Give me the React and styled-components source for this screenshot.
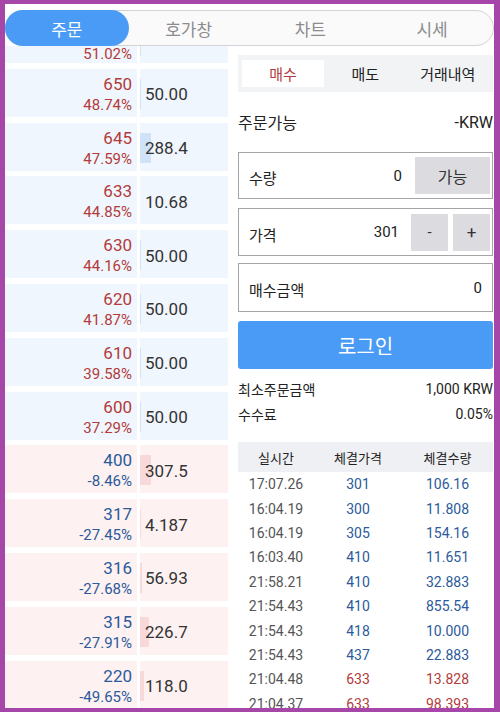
import React from 'react';
import styled, { createGlobalStyle } from 'styled-components';

const GlobalStyle = createGlobalStyle`
  html, body {
    margin: 0;
    padding: 0;
    background: #a646a8;
  }
  * {
    box-sizing: border-box;
  }
`;

const FONT = `Roboto, "Noto Sans CJK KR", "Noto Sans", sans-serif`;
const RED = '#b23b3b';
const BLUE = '#2c5a9a';

const Frame = styled.div`
  width: 500px;
  height: 712px;
  border-style: solid;
  border-color: #a646a8;
  border-width: 4px 6px 4px 5px;
  background: #ffffff;
  display: flex;
  flex-direction: column;
  overflow: hidden;
  font-family: ${FONT};
`;

const TabBar = styled.div`
  margin: 6px 0 0 0;
  height: 36px;
  flex: none;
  display: grid;
  grid-template-columns: repeat(4, 1fr);
  border: 1px solid #d3d3d7;
  border-radius: 18px;
  background: #fafafb;
`;

const Tab = styled.div`
  margin: -1px;
  display: flex;
  align-items: center;
  justify-content: center;
  border-radius: 18px;
  font-size: 17px;
  color: ${p => (p.active ? '#ffffff' : '#8c8c8e')};
  background: ${p => (p.active ? '#4a9bf5' : 'transparent')};
`;

const Body = styled.div`
  flex: 1;
  display: flex;
  overflow: hidden;
`;

const OrderBook = styled.div`
  width: 223px;
  flex: none;
  display: flex;
  flex-direction: column;
  gap: 5.8px;
`;

const BookRow = styled.div`
  height: ${p => (p.partial ? 17 : 48)}px;
  flex: none;
  display: flex;
  gap: 3px;
`;

const PriceCell = styled.div`
  width: 132px;
  flex: none;
  padding: ${p => (p.partial ? '0 5px 0 0' : '5px 5px 1px 0')};
  background: ${p => (p.side === 'sell' ? '#f0f6fd' : '#fdf1f1')};
  color: ${p => (p.side === 'sell' ? RED : BLUE)};
  display: flex;
  flex-direction: column;
  justify-content: flex-end;
  align-items: flex-end;
  overflow: hidden;
`;

const Price = styled.div`
  font-size: 17px;
  line-height: 21px;
`;

const Change = styled.div`
  font-size: 15px;
  line-height: ${p => (p.partial ? 18 : 21)}px;
  flex: none;
`;

const QtyCell = styled.div`
  flex: 1;
  position: relative;
  padding: 3px 0 0 5px;
  background: ${p => (p.side === 'sell' ? '#f0f6fd' : '#fdf1f1')};
  display: flex;
  align-items: center;
  font-size: 17px;
  color: #333333;
  overflow: hidden;
`;

const VolumeBar = styled.div`
  position: absolute;
  left: 0;
  top: ${p => (p.partial ? -20 : 10)}px;
  height: 30px;
  background: ${p => (p.side === 'sell' ? '#cfe2f8' : '#f8d8d8')};
`;

const QtyText = styled.span`
  position: relative;
`;

const Panel = styled.div`
  margin-left: 10px;
  width: 255px;
  flex: none;
  padding-top: 9px;
`;

const SubTabs = styled.div`
  height: 37px;
  padding: 5px 4px;
  background: #f2f3f5;
  display: grid;
  grid-template-columns: 82px 1fr 1fr;
`;

const SubTab = styled.div`
  display: flex;
  align-items: center;
  justify-content: center;
  font-size: 15px;
  color: ${p => (p.active ? RED : '#222222')};
  background: ${p => (p.active ? '#ffffff' : 'transparent')};
`;

const InfoLine = styled.div`
  height: ${p => p.h || 25}px;
  display: flex;
  align-items: center;
  justify-content: space-between;
  font-size: ${p => p.size || 14}px;
  color: #222222;
`;

const Field = styled.div`
  height: ${p => p.h}px;
  margin-bottom: ${p => p.mb || 0}px;
  border: 1px solid #a5a5a8;
  display: flex;
  align-items: center;
  padding: 4px 2px 4px 10px;
  gap: 5px;
`;

const FieldLabel = styled.div`
  flex: 1;
  font-size: 15px;
  color: #222222;
  padding-top: 4px;
`;

const FieldValue = styled.div`
  font-size: 15px;
  color: #222222;
  margin-right: ${p => p.mr || 0}px;
`;

const GreyButton = styled.div`
  width: ${p => p.w}px;
  height: 37px;
  background: #dcdce0;
  display: flex;
  align-items: center;
  justify-content: center;
  font-size: ${p => p.size || 16}px;
  color: #333333;
`;

const LoginButton = styled.div`
  margin: 9px 0 7px;
  height: 48px;
  border-radius: 3px;
  background: #4a9bf5;
  color: #ffffff;
  font-size: 20px;
  display: flex;
  align-items: center;
  justify-content: center;
`;

const TradeHead = styled.div`
  margin-top: 16px;
  height: 30px;
  background: #eff0f3;
  display: grid;
  grid-template-columns: 76px 88px 1fr;
  align-items: center;
  font-size: 13px;
  color: #222222;
  text-align: center;
`;

const TradeRow = styled.div`
  height: 24.4px;
  display: grid;
  grid-template-columns: 76px 88px 1fr;
  align-items: center;
  text-align: center;
  font-size: 14px;
  color: ${p => (p.up ? RED : BLUE)};
`;

const TimeCell = styled.div`
  color: #555555;
`;

const sells = [
  ['650', '48.74%', '50.00', 1],
  ['645', '47.59%', '288.4', 11],
  ['633', '44.85%', '10.68', 0],
  ['630', '44.16%', '50.00', 1],
  ['620', '41.87%', '50.00', 1],
  ['610', '39.58%', '50.00', 1],
  ['600', '37.29%', '50.00', 1],
];

const buys = [
  ['400', '-8.46%', '307.5', 11],
  ['317', '-27.45%', '4.187', 1],
  ['316', '-27.68%', '56.93', 2],
  ['315', '-27.91%', '226.7', 9],
  ['220', '-49.65%', '118.0', 4],
];

const trades = [
  ['17:07.26', '301', '106.16', false],
  ['16:04.19', '300', '11.808', false],
  ['16:04.19', '305', '154.16', false],
  ['16:03.40', '410', '11.651', false],
  ['21:58.21', '410', '32.883', false],
  ['21:54.43', '410', '855.54', false],
  ['21:54.43', '418', '10.000', false],
  ['21:54.43', '437', '22.883', false],
  ['21:04.48', '633', '13.828', true],
  ['21:04.37', '633', '98.393', true],
];

const Row = ({ side, price, change, qty, bar, partial }) => (
  <BookRow partial={partial}>
    <PriceCell side={side} partial={partial}>
      {!partial && <Price>{price}</Price>}
      <Change partial={partial}>{change}</Change>
    </PriceCell>
    <QtyCell side={side}>
      {bar > 0 && <VolumeBar side={side} partial={partial} style={{ width: bar }} />}
      {!partial && <QtyText>{qty}</QtyText>}
    </QtyCell>
  </BookRow>
);

export default function App() {
  return (
    <Frame>
      <GlobalStyle />
      <TabBar>
        <Tab active>주문</Tab>
        <Tab>호가창</Tab>
        <Tab>차트</Tab>
        <Tab>시세</Tab>
      </TabBar>
      <Body>
        <OrderBook>
          <Row partial side="sell" change="51.02%" bar={1} />
          {sells.map(([p, c, q, b], i) => (
            <Row key={'s' + i} side="sell" price={p} change={c} qty={q} bar={b} />
          ))}
          {buys.map(([p, c, q, b], i) => (
            <Row key={'b' + i} side="buy" price={p} change={c} qty={q} bar={b} />
          ))}
        </OrderBook>
        <Panel>
          <SubTabs>
            <SubTab active>매수</SubTab>
            <SubTab>매도</SubTab>
            <SubTab>거래내역</SubTab>
          </SubTabs>
          <InfoLine h={60} size={16}>
            <span>주문가능</span>
            <span>-KRW</span>
          </InfoLine>
          <Field h={47} mb={9}>
            <FieldLabel>수량</FieldLabel>
            <FieldValue mr={8}>0</FieldValue>
            <GreyButton w={75}>가능</GreyButton>
          </Field>
          <Field h={48} mb={7}>
            <FieldLabel>가격</FieldLabel>
            <FieldValue mr={7}>301</FieldValue>
            <GreyButton w={37} size={15}>-</GreyButton>
            <GreyButton w={37} size={17}>+</GreyButton>
          </Field>
          <Field h={49}>
            <FieldLabel>매수금액</FieldLabel>
            <FieldValue mr={8}>0</FieldValue>
          </Field>
          <LoginButton>로그인</LoginButton>
          <InfoLine>
            <span>최소주문금액</span>
            <span>1,000 KRW</span>
          </InfoLine>
          <InfoLine>
            <span>수수료</span>
            <span>0.05%</span>
          </InfoLine>
          <TradeHead>
            <div>실시간</div>
            <div>체결가격</div>
            <div>체결수량</div>
          </TradeHead>
          {trades.map(([t, p, q, up], i) => (
            <TradeRow key={i} up={up}>
              <TimeCell>{t}</TimeCell>
              <div>{p}</div>
              <div>{q}</div>
            </TradeRow>
          ))}
        </Panel>
      </Body>
    </Frame>
  );
}
